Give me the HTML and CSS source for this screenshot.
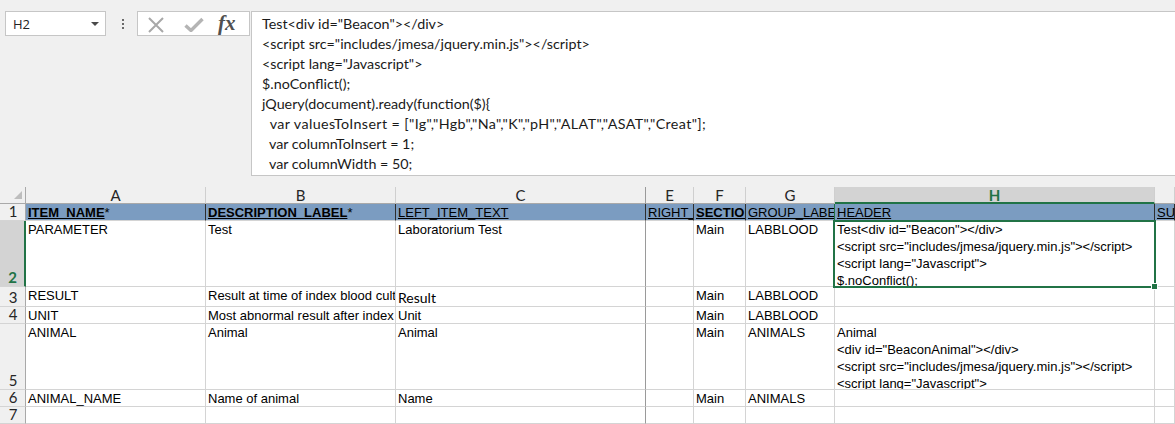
FILE: index.html
```html
<!DOCTYPE html>
<html>
<head>
<meta charset="utf-8">
<title>Sheet</title>
<link rel="stylesheet" href="styles.css">
</head>
<body>
<div class="top">
  <div class="namebox">
    <span class="ref">H2</span>
    <svg class="caret" width="8" height="4" viewBox="0 0 8 4"><path d="M0 0H8L4 4Z" fill="#4a4a4a"/></svg>
  </div>
  <div class="grip"><i></i><i></i><i></i></div>
  <div class="fxbox">
    <svg class="ico-x" width="18" height="16" viewBox="0 0 18 16"><path d="M2 1L16 15M16 1L2 15" stroke="#a8a8a8" stroke-width="2" fill="none"/></svg>
    <svg class="ico-ok" width="20" height="15" viewBox="0 0 20 15"><path d="M1.5 8.5L7 13.5L18.5 2" stroke="#b4b4b4" stroke-width="3.4" fill="none"/></svg>
    <span class="fx">fx</span>
  </div>
  <div class="formula">Test&lt;div id="Beacon"&gt;&lt;/div&gt;
&lt;script src="includes/jmesa/jquery.min.js"&gt;&lt;/script&gt;
&lt;script lang="Javascript"&gt;
$.noConflict();
jQuery(document).ready(function($){
<span class="wide">  var valuesToInsert = ["Ig","Hgb","Na","K","pH","ALAT","ASAT","Creat"];</span>
  var columnToInsert = 1;
  var columnWidth = 50;</div>
</div>

<div class="sheet">
  <!-- column headers -->
  <div class="corner"><svg width="8" height="8" viewBox="0 0 8 8"><path d="M8 0V8H0Z" fill="#bdbdbd"/></svg></div>
  <div class="ch">A</div>
  <div class="ch">B</div>
  <div class="ch hid">C</div>
  <div class="ch">E</div>
  <div class="ch">F</div>
  <div class="ch">G</div>
  <div class="ch sel">H</div>
  <div class="ch"></div>

  <!-- row 1 -->
  <div class="rh">1</div>
  <div class="c hd"><b><u>ITEM_NAME</u></b>*</div>
  <div class="c hd"><b><u>DESCRIPTION_LABEL</u></b>*</div>
  <div class="c hd"><u>LEFT_ITEM_TEXT</u></div>
  <div class="c hd"><u>RIGHT_ITEM_TEXT</u></div>
  <div class="c hd"><b><u>SECTION_LABEL</u></b></div>
  <div class="c hd gsel"><u>GROUP_LABEL</u></div>
  <div class="c hd"><u>HEADER</u></div>
  <div class="c hd"><u>SUBHEADER</u></div>

  <!-- row 2 -->
  <div class="rh rsel">2</div>
  <div class="c">PARAMETER</div>
  <div class="c">Test</div>
  <div class="c hid">Laboratorium Test</div>
  <div class="c"></div>
  <div class="c">Main</div>
  <div class="c">LABBLOOD</div>
  <div class="c wrap">Test&lt;div id="Beacon"&gt;&lt;/div&gt;
&lt;script src="includes/jmesa/jquery.min.js"&gt;&lt;/script&gt;
&lt;script lang="Javascript"&gt;
$.noConflict();</div>
  <div class="c"></div>

  <!-- row 3 -->
  <div class="rh">3</div>
  <div class="c">RESULT</div>
  <div class="c">Result at time of index blood culture</div>
  <div class="c hid cal">Result</div>
  <div class="c"></div>
  <div class="c">Main</div>
  <div class="c">LABBLOOD</div>
  <div class="c"></div>
  <div class="c"></div>

  <!-- row 4 -->
  <div class="rh">4</div>
  <div class="c">UNIT</div>
  <div class="c">Most abnormal result after index blood culture</div>
  <div class="c hid">Unit</div>
  <div class="c"></div>
  <div class="c">Main</div>
  <div class="c">LABBLOOD</div>
  <div class="c"></div>
  <div class="c"></div>

  <!-- row 5 -->
  <div class="rh">5</div>
  <div class="c">ANIMAL</div>
  <div class="c">Animal</div>
  <div class="c hid">Animal</div>
  <div class="c"></div>
  <div class="c">Main</div>
  <div class="c">ANIMALS</div>
  <div class="c wrap">Animal
&lt;div id="BeaconAnimal"&gt;&lt;/div&gt;
&lt;script src="includes/jmesa/jquery.min.js"&gt;&lt;/script&gt;
&lt;script lang="Javascript"&gt;</div>
  <div class="c"></div>

  <!-- row 6 -->
  <div class="rh">6</div>
  <div class="c">ANIMAL_NAME</div>
  <div class="c">Name of animal</div>
  <div class="c hid">Name</div>
  <div class="c"></div>
  <div class="c">Main</div>
  <div class="c">ANIMALS</div>
  <div class="c"></div>
  <div class="c"></div>

  <!-- row 7 -->
  <div class="rh">7</div>
  <div class="c"></div>
  <div class="c"></div>
  <div class="c hid"></div>
  <div class="c"></div>
  <div class="c"></div>
  <div class="c"></div>
  <div class="c"></div>
  <div class="c"></div>

  <div class="selection"><span class="handle"></span></div>
</div>
</body>
</html>
```

FILE: styles.css
```css
html, body {
  margin: 0;
  padding: 0;
  background: #f0f0f0;
  overflow: hidden;
}

.top {
  display: flex;
  align-items: flex-start;
  height: 187px;
  box-sizing: border-box;
  padding: 11px 0 0 5px;
  overflow: hidden;
}

.namebox {
  width: 101px;
  height: 25px;
  box-sizing: border-box;
  border: 1px solid #c6c6c6;
  background: #fff;
  display: flex;
  align-items: center;
  justify-content: space-between;
  padding: 0 6px 0 7px;
  font: 13px "Open Sans", "Liberation Sans", sans-serif;
  color: #222;
}

.namebox .caret {
  margin-top: 1px;
}

.grip {
  margin-left: 16px;
  display: flex;
  flex-direction: column;
  gap: 2px;
  padding-top: 8px;
}

.grip i {
  display: block;
  width: 2px;
  height: 2px;
  background: #6a6a6a;
}

.fxbox {
  margin-left: 13px;
  width: 113px;
  height: 25px;
  box-sizing: border-box;
  border: 1px solid #c6c6c6;
  background: #fff;
  display: flex;
  align-items: center;
  padding-left: 9px;
}

.ico-x {
  margin-top: 2px;
}

.ico-ok {
  margin-left: 19px;
  margin-top: 2px;
}

.fx {
  margin-left: 14px;
  font: italic bold 21px "Liberation Serif", "DejaVu Serif", serif;
  color: #505050;
  margin-top: -1px;
}

.formula {
  flex: 1;
  margin-left: 1px;
  margin-right: -2px;
  height: 165px;
  box-sizing: border-box;
  border: 1px solid #c6c6c6;
  background: #fff;
  padding: 2px 0 0 10px;
  font: 14.3px Lato, "Noto Sans", sans-serif;
  line-height: 20px;
  color: #1a1a1a;
  white-space: pre;
  overflow: hidden;
}

.formula .wide {
  letter-spacing: 0.38px;
}

.sheet {
  position: relative;
  display: grid;
  grid-template-columns: 26px 180px 190px 250px 48px 52px 89px 320px 20px;
  grid-template-rows: 17px 17px 66px 20px 17px 66px 17px 17px;
  background: #fff;
  font: 13px "Liberation Sans", Arial, sans-serif;
  color: #000;
  overflow: hidden;
}

.corner {
  background: #f0f0f0;
  border-right: 1px solid #a9a9a9;
  border-bottom: 1px solid #a9a9a9;
  display: flex;
  align-items: flex-end;
  justify-content: flex-end;
  padding: 0 3px 4px 0;
}

.ch {
  background: #f0f0f0;
  border-right: 1px solid #cfcfcf;
  border-bottom: 1px solid #a9a9a9;
  display: flex;
  align-items: center;
  justify-content: center;
  font: 15px Lato, "Noto Sans", sans-serif;
  color: #262626;
  line-height: 16px;
}

.ch.hid {
  border-right-color: #9a9a9a;
}

.ch.sel {
  background: #d3d3d3;
  color: #217346;
  font-weight: bold;
  border-bottom: 2px solid #217346;
}

.rh {
  background: #f0f0f0;
  border-right: 1px solid #a9a9a9;
  border-bottom: 1px solid #d4d4d4;
  display: flex;
  align-items: flex-end;
  justify-content: center;
  font: 15px Lato, "Noto Sans", sans-serif;
  color: #262626;
  line-height: 17px;
  padding-left: 1px;
}

.rh.rsel {
  background: #d3d3d3;
  color: #217346;
  font-weight: bold;
  border-right: 2px solid #217346;
}

.c {
  border-right: 1px solid #d4d4d4;
  border-bottom: 1px solid #d4d4d4;
  padding: 0 2px 0 2px;
  line-height: 17px;
  white-space: nowrap;
  overflow: hidden;
  min-width: 0;
}

.c.hid {
  border-right-color: #9a9a9a;
}

.c.wrap {
  white-space: pre;
}

.c.cal {
  font: 14px Lato, "Noto Sans", sans-serif;
  line-height: 20px;
  padding-top: 1px;
}

.c.hd {
  background: #7b9cc1;
  border-right: 1px solid #2e2e2e;
}

.c.hd u {
  text-underline-offset: 1px;
}

.c.hd.gsel {
  border-right-color: #217346;
}

.selection {
  position: absolute;
  left: 833px;
  top: 33px;
  width: 323px;
  height: 68px;
  box-sizing: border-box;
  border: 2px solid #217346;
  pointer-events: none;
}

.handle {
  position: absolute;
  right: -4px;
  bottom: -4px;
  width: 5px;
  height: 5px;
  background: #217346;
  border: 1px solid #fff;
}
```
